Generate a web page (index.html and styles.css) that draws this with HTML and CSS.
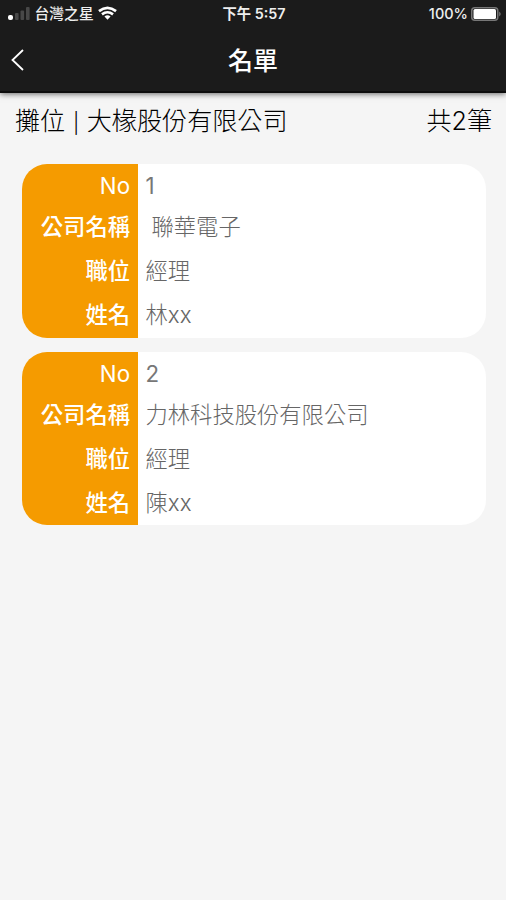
FILE: index.html
```html
<!DOCTYPE html>
<html lang="zh-Hant">
<head>
<meta charset="utf-8">
<title>名單</title>
<link rel="stylesheet" href="styles.css">
</head>
<body>
<header class="top">
  <div class="status">
    <div class="carrier">
      <svg class="signal" width="22" height="14" viewBox="0 0 22 14"><rect x="0" y="8" width="5" height="5" rx="2" fill="#fff"/><rect x="7" y="6" width="3.6" height="7" rx="1" fill="#484848"/><rect x="12.5" y="3.5" width="3.6" height="9.5" rx="1" fill="#484848"/><rect x="18" y="0" width="3.6" height="13" rx="1" fill="#484848"/></svg>
      <span class="name">台灣之星</span>
      <svg class="wifi" width="19" height="14" viewBox="0 0 20 14" fill="none" stroke="#fff" stroke-width="2.8"><path d="M1 5Q10-2 19 5M4.2 8.4Q10 4 15.8 8.4"/><path d="M10 14 6.8 10.6Q10 8.2 13.2 10.6Z" fill="#fff" stroke="none"/></svg>
    </div>
    <div class="time">下午 5:57</div>
    <div class="power"><span>100%</span>
      <svg width="31" height="14" viewBox="0 0 31 14"><rect x=".75" y=".75" width="26" height="12.5" rx="3" fill="none" stroke="#777" stroke-width="1.5"/><rect x="2.5" y="2" width="22.5" height="10" rx="1.5" fill="#fff"/><path d="M28.2 4.5q3 2.5 0 5z" fill="#777"/></svg>
    </div>
  </div>
  <nav class="nav">
    <svg class="back" width="13" height="22" viewBox="0 0 13 22" fill="none" stroke="#fff" stroke-width="1.8"><path d="M12 1 1.5 11 12 21"/></svg>
    <h1>名單</h1>
  </nav>
</header>
<main>
  <div class="summary"><span class="booth">攤位 <span class="bar">|</span> 大椽股份有限公司</span><span class="count">共2筆</span></div>
  <section class="card">
    <dl><dt class="latin">No</dt><dd class="latin">1</dd><dt>公司名稱</dt><dd class="indent">聯華電子</dd><dt>職位</dt><dd>經理</dd><dt>姓名</dt><dd>林xx</dd></dl>
  </section>
  <section class="card">
    <dl><dt class="latin">No</dt><dd class="latin">2</dd><dt>公司名稱</dt><dd>力林科技股份有限公司</dd><dt>職位</dt><dd>經理</dd><dt>姓名</dt><dd>陳xx</dd></dl>
  </section>
</main>
</body>
</html>
```
FILE: styles.css
```css
* { box-sizing: border-box; }
body { margin: 0; min-height: 900px; background: #f5f5f5; font-family: Inter, "Noto Sans CJK TC", sans-serif; }
.top { height: 93px; background: #1b1b1b; color: #fff; border-bottom: 2px solid #0c0c0c; box-shadow: 0 1px 6px rgba(0,0,0,.6); }
.status { height: 27px; display: grid; grid-template-columns: 1fr auto 1fr; align-items: center; padding: 0 6px 0 8px; font-size: 14.8px; line-height: 26px; font-weight: 500; color: #eee; }
.carrier, .power { display: flex; align-items: center; gap: 4.5px; }
.power { justify-content: flex-end; gap: 3px; font-size: 14.5px; }
.power svg { margin-right: -2px; }
.wifi { margin-top: -2px; }
.time { font-weight: 600; font-size: 14.3px; }
.nav { height: 65px; display: grid; grid-template-columns: 60px 1fr 60px; align-items: center; }
.back { margin-left: 11px; }
h1 { margin: 2px 0 0; font-size: 25px; line-height: 36px; font-weight: 500; text-align: center; }
.summary { height: 71px; padding: 10px 14px 0 15px; display: flex; justify-content: space-between; font-size: 25.1px; line-height: 36px; font-weight: 300; color: #000; white-space: nowrap; }
.bar { display: inline-block; width: 7.5px; text-align: center; font-size: 20px; font-weight: 300; }
.card { margin: 0 20px 14px 22px; height: 173.5px; border-radius: 25px; overflow: hidden; background: linear-gradient(90deg, #f59b00 116px, #fff 116px); }
dl { margin: 0; display: grid; grid-template-columns: 116px 1fr; grid-template-rows: 41px 44px 44px 44px; font-size: 22.3px; line-height: 44px; }
dt { padding-right: 8px; text-align: right; color: #fff; font-weight: 500; }
dd { margin: 0; padding-left: 7.5px; color: #666; font-weight: 300; }
.latin { font-weight: 400; }
dd.latin { color: #777; }
.indent { padding-left: 13.5px; }
```
